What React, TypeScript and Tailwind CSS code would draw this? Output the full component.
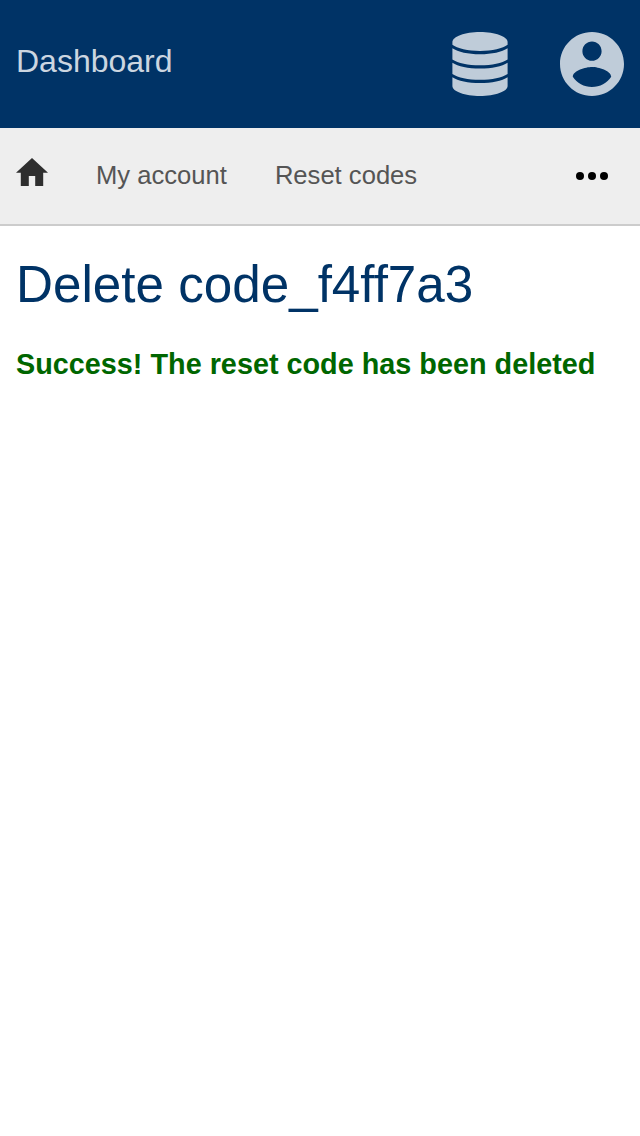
import React from "react";

function DatabaseIcon() {
  return (
    <svg className="h-16 w-14" viewBox="0 0 56 64" fill="currentColor" aria-hidden="true">
      <path d="M28 0C43 0 55.6 4.6 55.6 10v2.8C51 16.5 40 19 28 19S5 16.5 .4 12.8V10C.4 4.6 13 0 28 0Z" />
      <path d="M.4 16.2C6 20 16 22.2 28 22.2S50 20 55.6 16.2v11.2C50 31.2 40 33.3 28 33.3S6 31.2 .4 27.4Z" />
      <path d="M.4 30.7C6 34.5 16 36.6 28 36.6s22-2.1 27.6-5.9v11.2C50 45.6 40 47.7 28 47.7S6 45.6 .4 41.9Z" />
      <path d="M.4 45.2C6 49 16 51 28 51s22-2 27.6-5.8V54C55.6 59.5 43 64 28 64S.4 59.5.4 54Z" />
    </svg>
  );
}

function AccountIcon() {
  return (
    <svg className="size-16" viewBox="2 2 20 20" fill="currentColor" aria-hidden="true">
      <path d="M12 2C6.48 2 2 6.48 2 12s4.48 10 10 10 10-4.48 10-10S17.52 2 12 2zm0 3c1.66 0 3 1.34 3 3s-1.34 3-3 3-3-1.34-3-3 1.34-3 3-3zm0 14.2c-2.5 0-4.71-1.28-6-3.22.03-1.99 4-3.08 6-3.08 1.99 0 5.97 1.09 6 3.08-1.29 1.94-3.5 3.22-6 3.22z" />
    </svg>
  );
}

export default function App() {
  return (
    <div className="min-h-[1136px] bg-white font-['Liberation_Sans',Arial,sans-serif]">
      <header className="flex h-32 items-center justify-between bg-[#003366] px-4 text-[#bfccd9]">
        <a className="pb-1.5 text-[32px] leading-10 text-[#ccd6e0]">Dashboard</a>
        <div className="flex gap-[52px]">
          <DatabaseIcon />
          <AccountIcon />
        </div>
      </header>
      <nav className="flex h-[98px] items-center border-b-2 border-[#cccccc] bg-[#eeeeee] pr-8 pl-4 text-[25.6px] leading-8 text-[#555555]">
        <svg className="mr-12 mb-2 h-[28px] w-8 text-[#2e2e2e]" viewBox="2 3 20 17" preserveAspectRatio="none" fill="currentColor" aria-label="Home">
          <path d="M10 20v-6h4v6h5v-8h3L12 3 2 12h3v8z" />
        </svg>
        <a className="mr-12 pb-0.5">My account</a>
        <a className="pb-0.5">Reset codes</a>
        <svg className="ml-auto h-2 w-8 text-black" viewBox="0 0 32 8" fill="currentColor" aria-label="More">
          <circle cx="4" cy="4" r="4" />
          <circle cx="16" cy="4" r="4" />
          <circle cx="28" cy="4" r="4" />
        </svg>
      </nav>
      <main className="px-4 pt-[29px]">
        <h1 className="text-[51.2px] leading-[60px] text-[#003366]">Delete code_f4ff7a3</h1>
        <p className="mt-[31px] text-[28.8px] leading-9 font-bold text-[#006600]">Success! The reset code has been deleted</p>
      </main>
    </div>
  );
}
